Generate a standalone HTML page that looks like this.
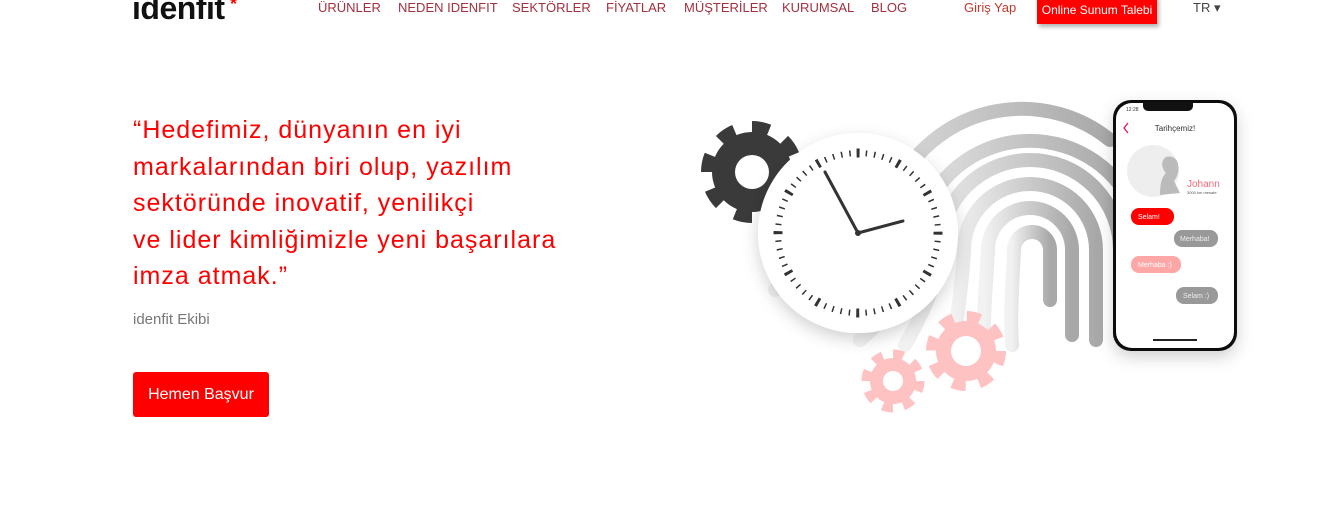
<!DOCTYPE html>
<html><head><meta charset="utf-8"><style>
*{margin:0;padding:0;box-sizing:border-box}
body{width:1339px;height:514px;overflow:hidden;background:#fff;font-family:"Liberation Sans",sans-serif;position:relative}
.logo{position:absolute;left:132px;top:-10px;font-size:32px;font-weight:bold;color:#111;letter-spacing:-0.5px}
.logo span{color:#f00;font-size:18px;position:absolute;right:-12px;top:4px}
.nav{position:absolute;top:0;font-size:13px;color:#a3303f;line-height:15px}
.btn2{position:absolute;left:1037px;top:-4px;width:120px;height:28px;background:#f00;color:#fff;font-size:12px;text-align:center;line-height:28px;box-shadow:2px 3px 4px rgba(0,0,0,.3)}
.quote{position:absolute;left:133px;top:112px;font-size:25px;line-height:36.5px;color:#f00;letter-spacing:1px}
.sig{position:absolute;left:133px;top:311px;font-size:15px;color:#777}
.cta{position:absolute;left:133px;top:372px;width:136px;height:45px;background:#f00;border-radius:3px;color:#fff;font-size:16px;text-align:center;line-height:45px}
</style></head><body>
<div class="logo">idenfit<span>*</span></div>
<div class="nav" style="left:318px">ÜRÜNLER</div>
<div class="nav" style="left:398px">NEDEN IDENFIT</div>
<div class="nav" style="left:512px">SEKTÖRLER</div>
<div class="nav" style="left:606px">FİYATLAR</div>
<div class="nav" style="left:684px">MÜŞTERİLER</div>
<div class="nav" style="left:782px">KURUMSAL</div>
<div class="nav" style="left:871px">BLOG</div>
<div class="nav" style="left:964px;color:#c0392b">Giriş Yap</div>
<div class="btn2">Online Sunum Talebi</div>
<div class="nav" style="left:1193px;color:#444">TR ▾</div>
<div class="quote">“Hedefimiz, dünyanın en iyi<br>markalarından biri olup, yazılım<br>sektöründe inovatif, yenilikçi<br>ve lider kimliğimizle yeni başarılara<br>imza atmak.”</div>
<div class="sig">idenfit Ekibi</div>
<div class="cta">Hemen Başvur</div>
<svg style="position:absolute;left:0;top:0" width="1339" height="514">
<defs>
<linearGradient id="fg" x1="0" x2="1" y1="0" y2="0"><stop offset="0" stop-color="#f2f2f2"/><stop offset="1" stop-color="#a8a8a8"/></linearGradient>
<filter id="sh" x="-20%" y="-20%" width="140%" height="140%"><feDropShadow dx="0" dy="6" stdDeviation="8" flood-opacity="0.18"/></filter>
</defs>
<g fill="none" stroke="url(#fg)" stroke-width="14" stroke-linecap="round">
<path d="M1012 345 C1010 320 1012 290 1014 250 A18 18 0 0 1 1050 250 V300"/>
<path d="M985 355 C982 320 986 290 988 250 A42 42 0 0 1 1072 250 V335"/>
<path d="M952 360 C956 320 962 290 964 250 A66 66 0 0 1 1096 250 V340"/>
<path d="M905 345 C925 310 938 280 940 250 A90 90 0 0 1 1120 250 V335"/>
<path d="M860 340 C895 310 914 280 916 250 A114 114 0 0 1 1120 185"/>
<path d="M775 290 C860 260 890 230 900 180 A140 140 0 0 1 1110 140"/>
</g>
<g fill="#3a3a3a">
<circle cx="752" cy="172" r="40"/>
<circle cx="752" cy="172" r="44" fill="none" stroke="#3a3a3a" stroke-width="14" stroke-dasharray="17 17.5"/>
<circle cx="752" cy="172" r="17" fill="#fff"/>
</g>
<g fill="#ffc2c2">
<circle cx="966" cy="351" r="30"/>
<circle cx="966" cy="351" r="33" fill="none" stroke="#ffc2c2" stroke-width="14" stroke-dasharray="13 13"/>
<circle cx="966" cy="351" r="15" fill="#fff"/>
<circle cx="893" cy="381" r="23"/>
<circle cx="893" cy="381" r="26" fill="none" stroke="#ffc2c2" stroke-width="11" stroke-dasharray="10.2 10.2"/>
<circle cx="893" cy="381" r="10" fill="#fff"/>
</g>
<circle cx="858" cy="233" r="100" fill="#fff" filter="url(#sh)"/>
<circle cx="858" cy="233" r="80" fill="none" stroke="#333" stroke-width="6" stroke-dasharray="1.5 6.88" transform="rotate(-90.5 858 233)"/>
<circle cx="858" cy="233" r="80" fill="none" stroke="#333" stroke-width="9" stroke-dasharray="3 38.9" transform="rotate(-91 858 233)"/>
<g stroke="#333" stroke-width="3" stroke-linecap="round"><line x1="858" y1="233" x2="825" y2="172"/><line x1="858" y1="233" x2="903" y2="221"/></g>
<circle cx="858" cy="233" r="3" fill="#333"/>
<g filter="url(#sh)"><rect x="1113" y="100" width="124" height="251" rx="18" fill="#111"/></g>
<rect x="1116" y="103" width="118" height="245" rx="16" fill="#fff"/>
<path d="M1143 102 h50 v4 a5 5 0 0 1 -5 5 h-40 a5 5 0 0 1 -5 -5z" fill="#111"/>
<text x="1126" y="111" font-size="5" fill="#333">12:28</text>
<path d="M1128 123 l-4 5 4 5" stroke="#f04" fill="none" stroke-width="1.2"/>
<text x="1175" y="131" font-size="8" fill="#333" text-anchor="middle">Tarihçemiz!</text>
<circle cx="1153" cy="171" r="26" fill="#eee"/>
<path d="M1160 195 c0-12 2-18 6-22 c-4-4-6-12 0-16 c6-2 12 2 12 8 c2 6-2 14-4 16 l6 12" fill="#bbb"/>
<text x="1187" y="187" font-size="10" fill="#f06a7a">Johann</text>
<text x="1187" y="194" font-size="4" fill="#555">3000 km mesafe</text>
<rect x="1131" y="208" width="43" height="17" rx="8" fill="#f00"/><text x="1138" y="219" font-size="7" fill="#fff">Selam!</text>
<rect x="1174" y="230" width="44" height="17" rx="8" fill="#999"/><text x="1180" y="241" font-size="7" fill="#eee">Merhaba!</text>
<rect x="1131" y="256" width="50" height="17" rx="8" fill="#ffa6a6"/><text x="1138" y="267" font-size="7" fill="#fff">Merhaba :)</text>
<rect x="1176" y="287" width="42" height="17" rx="8" fill="#999"/><text x="1183" y="298" font-size="7" fill="#eee">Selam :)</text>
<rect x="1153" y="339" width="44" height="2" fill="#222"/>
</svg>
</body></html>
